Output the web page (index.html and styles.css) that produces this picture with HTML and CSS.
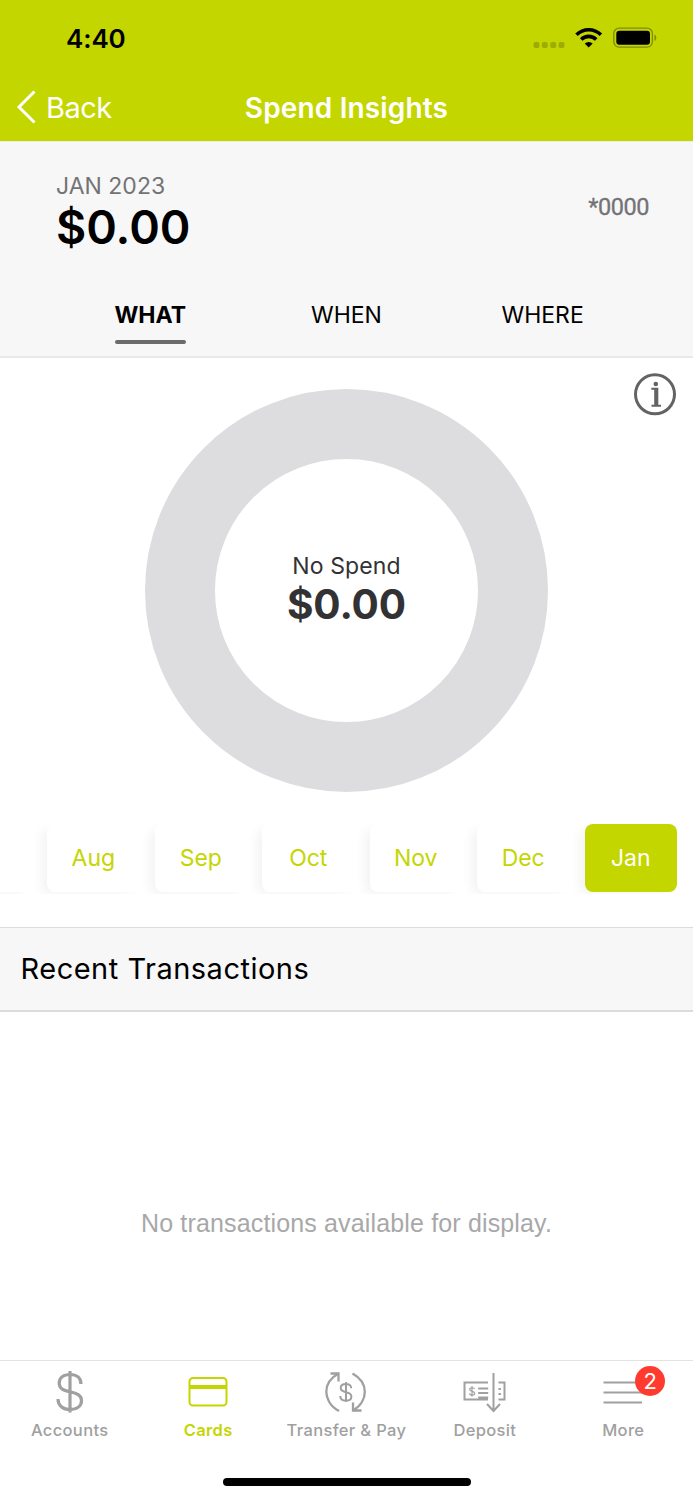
FILE: index.html
```html
<!DOCTYPE html>
<html lang="en">
<head>
<meta charset="utf-8">
<title>Spend Insights</title>
<link rel="stylesheet" href="styles.css">
</head>
<body>
<header class="top">
  <div class="status">
    <span class="time">4:40</span>
    <svg class="status-icons" width="126" height="24" viewBox="0 0 126 24">
      <g fill="#9dac05"><rect x="0.500" y="15" width="6" height="6" rx="2"/><rect x="8.800" y="15" width="6" height="6" rx="2"/><rect x="17.200" y="15" width="6" height="6" rx="2"/><rect x="25.500" y="15" width="6" height="6" rx="2"/></g>
      <g fill="none" stroke="#000" stroke-width="3.600"><path d="M43.500 7.800a17.300 17.300 0 0 1 24.400 0"/><path d="M48.200 12.500a10.600 10.600 0 0 1 15 0"/></g>
      <path d="M55.700 20.500l-4-4a5.800 5.800 0 0 1 8 0z" fill="#000"/>
      <rect x="80.800" y="1.200" width="38.600" height="19" rx="5.400" fill="none" stroke="#7f8b04" stroke-width="1.300"/>
      <rect x="83.300" y="3.700" width="33.700" height="14" rx="3" fill="#000"/>
      <path d="M121.500 7.500v6.600c2.400-1.100 2.400-5.500 0-6.600z" fill="#7f8b04"/>
    </svg>
  </div>
  <nav class="bar">
    <a class="back"><svg width="20" height="34" viewBox="0 0 20 34"><path d="M18.500 1.500L3 17l15.500 15.500" fill="none" stroke="#fff" stroke-width="3"/></svg><span>Back</span></a>
    <h1 class="title">Spend Insights</h1>
  </nav>
</header>
<section class="summary">
  <div class="summary-row">
    <div>
      <div class="period">JAN 2023</div>
      <div class="total">$0.00</div>
    </div>
    <div class="card-no">*0000</div>
  </div>
  <div class="tabs">
    <a class="tab active"><span>WHAT</span></a>
    <a class="tab when"><span>WHEN</span></a>
    <a class="tab where"><span>WHERE</span></a>
  </div>
</section>
<section class="chart">
  <div class="donut">
    <span class="donut-label">No Spend</span>
    <span class="donut-value">$0.00</span>
  </div>
  <svg class="info" width="44" height="44" viewBox="0 0 44 44"><circle cx="22" cy="22.300" r="19.500" fill="none" stroke="#636363" stroke-width="3"/><circle cx="22.800" cy="12" r="2.300" fill="#636363"/><path d="M18.300 15.700h7v17h2.700v2h-9.500v-2h2.700v-15h-2.900z" fill="#636363"/></svg>
</section>
<section class="months">
  <a class="month"></a><a class="month">Aug</a><a class="month">Sep</a><a class="month">Oct</a><a class="month">Nov</a><a class="month">Dec</a><a class="month selected">Jan</a>
</section>
<h2 class="recent">Recent Transactions</h2>
<main class="empty"><span>No transactions available for display.</span></main>
<footer class="tabbar">
  <div class="items">
    <a class="item"><svg width="44" height="44" viewBox="0 0 44 44" fill="none" stroke="#a0a0a0" stroke-width="3.200"><path d="M22 1v41.500M33 14c0-6-4-9.500-11-9.500S11.200 8 11.200 13c0 6 4.500 7.300 10.800 8.800 6.500 1.500 11.500 3 11.500 8.700 0 5.500-4.500 9-11.500 9s-12-4-12-10.500"/></svg><span>Accounts</span></a>
    <a class="item on"><svg width="44" height="44" viewBox="0 0 44 44"><rect x="3.500" y="8" width="37" height="27.500" rx="3.500" fill="none" stroke="#c4d600" stroke-width="2"/><path d="M3.500 17h37" stroke="#c4d600" stroke-width="3.800"/></svg><span>Cards</span></a>
    <a class="item"><svg width="44" height="44" viewBox="0 0 44 44" fill="none" stroke="#a0a0a0" stroke-width="2.300"><path d="M14.500 3.500C4.500 9 2.300 16 2.300 21.800S5.500 36 15 41M28.500 3.500c10.500 5.800 12.300 12.800 12.300 18.300S38 35.300 29 40.500"/><path d="M6.500 3.500h8v8M29 32.500v8h8.500"/><path d="M22 12v20M27.200 18.200c0-3-2-4.300-5.300-4.300s-5.200 1.700-5.200 4.100c0 2.700 2 3.400 5.200 4.200 3.300.7 5.500 1.500 5.500 4.300s-2.300 4.200-5.500 4.200-5.700-1.500-5.700-4.700" stroke-width="2"/></svg><span>Transfer &amp; Pay</span></a>
    <a class="item"><svg width="44" height="44" viewBox="0 0 44 44" fill="none" stroke="#a0a0a0" stroke-width="2"><path d="M25.500 12.500H2v17h23.500M36 12.500h6v17h-6M15.700 18.500h10M15.700 23h10M15.700 27.500h10" transform="translate(-.5 0)"/><path d="M30.500 3v38M24 34l6.500 7 6.500-7"/><path d="M35.500 19h2.400M35.500 24h2.400"/><path d="M9 16v10.500M11.500 19c-.3-1.700-4.800-1.800-4.800.4 0 2.400 5 1.300 5 3.900 0 2.500-4.800 2.400-5.100.1" stroke-width="1.200"/></svg><span>Deposit</span></a>
    <a class="item"><svg width="44" height="44" viewBox="0 0 44 44" fill="none" stroke="#a0a0a0" stroke-width="2"><path d="M2.500 12.500H41M2.500 22.500H41M2.500 32.500H41"/></svg><span>More</span><b class="badge">2</b></a>
  </div>
  <div class="home"></div>
</footer>
</body>
</html>
```
FILE: styles.css
```css
* { box-sizing: border-box; }
body { margin: 0; width: 693px; height: 1500px; overflow: hidden; display: flex; flex-direction: column; background: #fff; color: #000; font-family: Inter, sans-serif; }
.top { height: 141px; background: #c4d600; flex: none; }
.status { height: 75px; display: flex; justify-content: space-between; align-items: center; padding: 1px 34px 0 66px; }
.time { font-size: 26px; font-weight: 600; letter-spacing: -0.1px; }
.status-icons { margin-top: 1px; }
.bar { height: 64px; display: grid; grid-template-columns: 1fr auto 1fr; align-items: center; color: #fff; }
.back { display: flex; align-items: center; gap: 10px; padding-left: 16px; font-size: 29px; letter-spacing: -0.5px; }
.title { margin: 2px 0 0; font-size: 28px; font-weight: 600; letter-spacing: 0.15px; }
.summary { height: 217px; flex: none; background: #f7f7f7; border-top: 1px solid #ececec; border-bottom: 2px solid #e9e9e9; }
.summary-row { height: 131px; display: flex; justify-content: space-between; padding: 30px 44px 0 56px; }
.period { font-size: 23px; line-height: 28px; color: #737377; letter-spacing: 0; }
.total { font-size: 46.5px; line-height: 55px; font-weight: 600; letter-spacing: 0; }
.card-no { font: 23.5px/28px Roboto, sans-serif; color: #737377; padding-top: 21px; letter-spacing: -0.45px; -webkit-text-stroke: 0.3px #737377; }
.tabs { display: flex; padding-left: 114.5px; }
.tab { font-size: 23px; line-height: 28px; width: 71.5px; height: 43px; margin-top: 28px; letter-spacing: 0; }
.active { font-weight: 700; position: relative; }
.active::after { content: ""; position: absolute; left: 0; right: 0; bottom: 0.5px; height: 3.5px; border-radius: 2px; background: #6b6b6b; }
.when { margin-left: 125px; }
.where { margin-left: 119px; width: 84px; }
.chart { height: 466px; flex: none; position: relative; padding-top: 31px; }
.donut { width: 402.5px; height: 402.5px; margin: 0 auto; border: 70px solid #dddde0; border-radius: 50%; display: flex; flex-direction: column; align-items: center; justify-content: center; color: #323234; padding-top: 2px; }
.donut-label { font-size: 23px; line-height: 28px; letter-spacing: 0.1px; }
.donut-value { font-size: 40.5px; line-height: 50px; font-weight: 700; letter-spacing: -0.1px; }
.info { position: absolute; left: 633px; top: 14px; }
.months { height: 70px; flex: none; overflow: hidden; display: flex; gap: 15px; margin-left: -60.5px; width: 753.5px; }
.month { flex: none; width: 92.5px; height: 68px; border-radius: 8px; background: #fff; box-shadow: -7px 4px 12px -2px rgba(0,0,0,.05); color: #c4d600; font-size: 23px; display: flex; align-items: center; justify-content: center; letter-spacing: -0.1px; }
.selected { background: #c4d600; color: #fff; }
.recent { flex: none; margin: 33px 0 0; height: 85px; border-top: 1px solid #dcdcdc; border-bottom: 2px solid #dcdcdc; background: #f7f7f7; font-size: 29px; font-weight: 400; line-height: 82px; padding-left: 20.5px; letter-spacing: 0.5px; }
.empty { flex: 1; display: flex; justify-content: center; padding-top: 196px; color: #a8a8a8; font: 25px/30px "Liberation Sans", sans-serif; letter-spacing: 0.15px; }
.tabbar { height: 140px; flex: none; border-top: 1px solid #e3e3e3; display: flex; flex-direction: column; align-items: center; }
.items { width: 692px; height: 117px; display: grid; grid-template-columns: repeat(5, 1fr); padding-top: 9px; }
.item { position: relative; display: flex; flex-direction: column; align-items: center; color: #a0a0a0; font-size: 16.5px; line-height: 20px; font-weight: 500; letter-spacing: 0.35px; gap: 6px; }
.on { color: #c4d600; font-weight: 600; }
.badge { position: absolute; left: 81px; top: -4px; width: 30px; height: 30px; border-radius: 50%; background: #ff3b30; color: #fff; font-size: 22px; line-height: 30px; font-weight: 400; text-align: center; letter-spacing: 0; }
.home { width: 248px; height: 8px; border-radius: 4px; background: #000; }
```
